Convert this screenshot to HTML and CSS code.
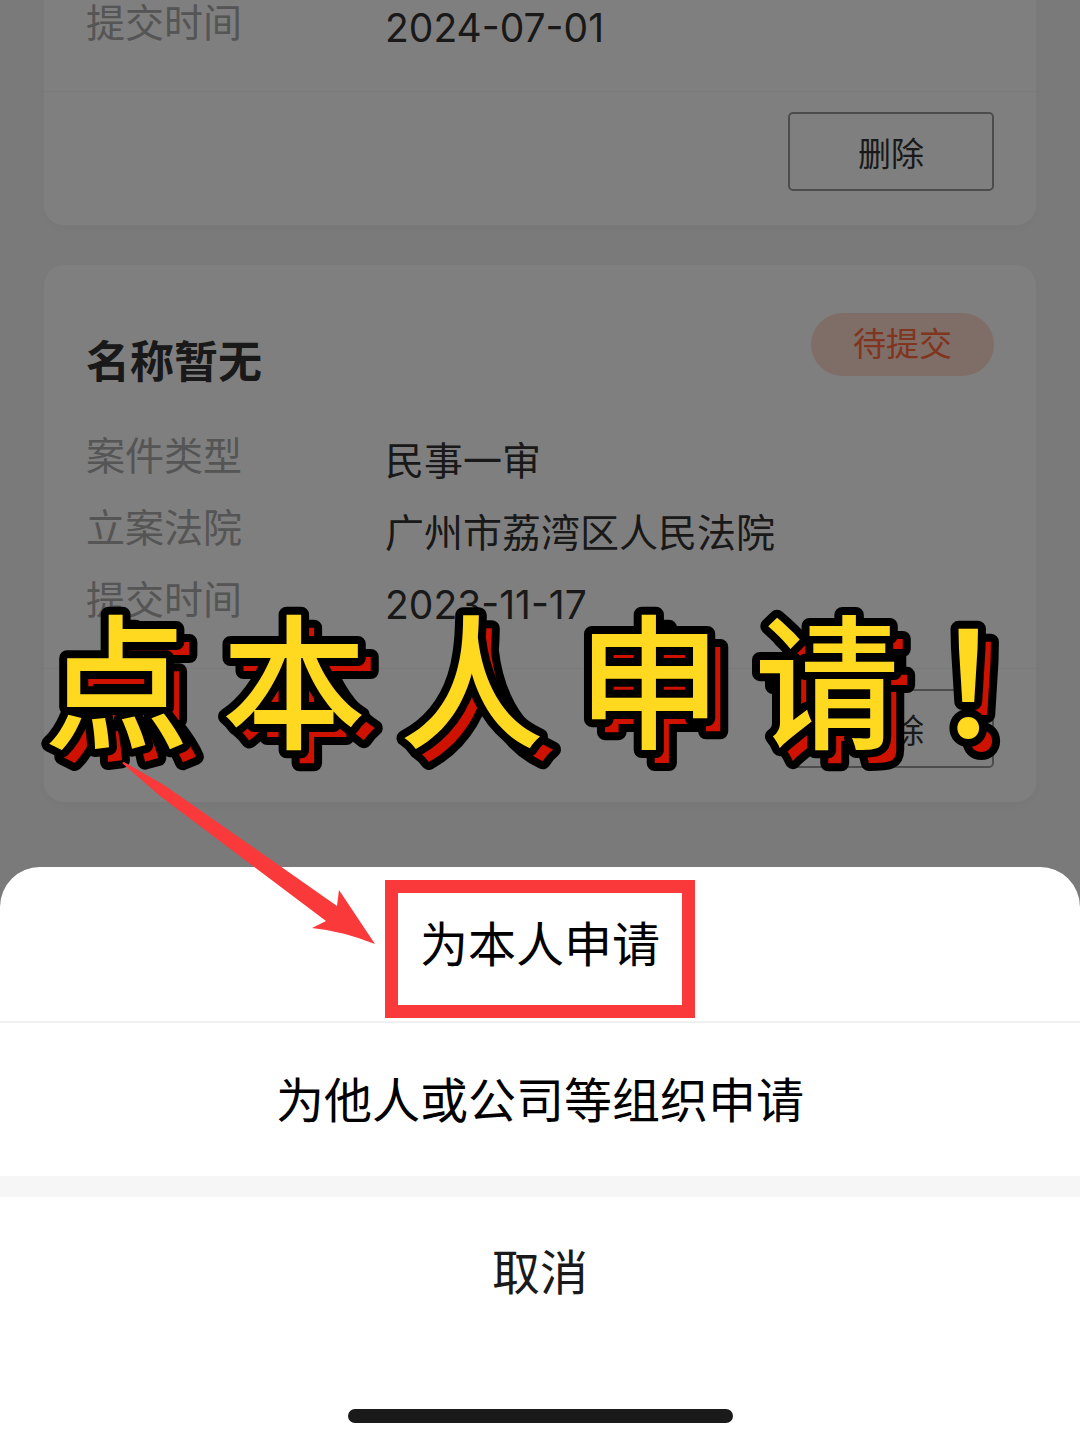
FILE: index.html
```html
<!DOCTYPE html>
<html lang="zh-CN">
<head>
    <meta charset="UTF-8">
    <meta name="viewport" content="width=device-width, initial-scale=1.0">
    <title>为本人申请</title>
    <link rel="stylesheet" href="styles.css">
</head>
<body>
<main class="list">
    <section class="card card-first">
        <dl class="info">
            <div class="row">
                <dt>提交时间</dt>
                <dd>2024-07-01</dd>
            </div>
        </dl>
        <div class="card-footer">
            <button type="button" class="delete">删除</button>
        </div>
    </section>

    <section class="card">
        <div class="card-header">
            <h2>名称暂无</h2>
            <span class="status">待提交</span>
        </div>
        <dl class="info">
            <div class="row">
                <dt>案件类型</dt>
                <dd>民事一审</dd>
            </div>
            <div class="row">
                <dt>立案法院</dt>
                <dd>广州市荔湾区人民法院</dd>
            </div>
            <div class="row">
                <dt>提交时间</dt>
                <dd>2023-11-17</dd>
            </div>
        </dl>
        <div class="card-footer">
            <button type="button" class="delete">删除</button>
        </div>
    </section>
</main>

<div class="mask"></div>

<svg class="caption" width="1050" height="200" viewBox="0 0 1050 200">
    <text class="caption-shadow" x="27" y="151" aria-hidden="true">点 本 人 申 请 ！</text>
    <text class="caption-text" x="14" y="138">点 本 人 申 请 ！</text>
</svg>

<div class="sheet">
    <button type="button" class="option"><span class="marked">为本人申请</span></button>
    <button type="button" class="option">为他人或公司等组织申请</button>
    <button type="button" class="cancel">取消</button>
    <div class="home-bar"></div>
    <svg class="arrow" width="256" height="186" viewBox="0 0 256 186" aria-hidden="true">
        <path d="M2 3 L4 2 L44 25 L160 106 L217 146 L219 130 L255 184 Q222 171 192 168 L206 161 L133 106 L40 36 Z" fill="#fa393b"/>
    </svg>
</div>
</body>
</html>
```

FILE: styles.css
```css
* {
    box-sizing: border-box;
}
body {
    margin: 0;
    min-height: 100vh;
    overflow: hidden;
    background-color: #f5f5f5;
    color: #333;
    font-family: Inter, "Noto Sans CJK SC", sans-serif;
    font-size: 39px;
}
h2, dl, dd {
    margin: 0;
}
button {
    font-family: inherit;
    cursor: pointer;
}

/* case list */
.list {
    display: flex;
    flex-direction: column;
    gap: 40px;
    padding: 0 44px;
}
.card {
    background-color: #fff;
    border-radius: 20px;
    box-shadow: 0 4px 12px rgba(0, 0, 0, 0.03);
}
.card-first {
    margin-top: -7px;
    border-radius: 0 0 20px 20px;
}
.card-header {
    display: flex;
    justify-content: space-between;
    align-items: flex-start;
    padding: 48px 42px 0;
}
.card-header h2 {
    padding-top: 17px;
    font-size: 44px;
    line-height: 64px;
    font-weight: bold;
}
.status {
    padding: 0 42px;
    border-radius: 32px;
    background-color: #ffdcd0;
    color: #ff6a3c;
    font-size: 33px;
    line-height: 63px;
}
.info {
    padding: 0 42px 26px;
}
.card-header + .info {
    padding-top: 32px;
}
.row {
    display: flex;
    height: 72px;
}
.row dt {
    width: 299px;
    color: #aaa;
    line-height: 60px;
}
.row dd {
    flex: 1;
    line-height: 69px;
}
.card-footer {
    display: flex;
    justify-content: flex-end;
    padding: 20px 42px 34px;
    border-top: 1px solid #f5f5f5;
}
.delete {
    width: 206px;
    height: 79px;
    border: 2px solid #999;
    border-radius: 5px;
    background-color: #fff;
    color: #333;
    font-size: 33px;
}

.mask {
    position: fixed;
    inset: 0;
    background-color: rgba(0, 0, 0, 0.5);
}

/* big outlined caption with a red copy behind it */
.caption {
    position: absolute;
    top: 600px;
    left: 30px;
    overflow: visible;
    font-family: "Noto Sans CJK SC", sans-serif;
    font-size: 145px;
    font-weight: 500;
    stroke: #000;
    stroke-width: 16px;
    stroke-linejoin: round;
    paint-order: stroke;
}
.caption-text {
    fill: #ffd91f;
}
.caption-shadow {
    fill: #cf1100;
}

/* action sheet */
.sheet {
    position: fixed;
    left: 0;
    right: 0;
    bottom: 0;
    display: flex;
    flex-direction: column;
    border-radius: 40px 40px 0 0;
    background-color: #fff;
}
.option,
.cancel {
    height: 155px;
    padding: 0 0 6px;
    border: none;
    background: none;
    color: #000;
    font-size: 48px;
}
.option:first-child {
    height: 154px;
}
.option + .option {
    border-top: 2px solid #f0f0f0;
}
.cancel {
    height: 170px;
    border-top: 21px solid #f6f6f6;
    color: #1a1a1a;
}
.marked {
    position: relative;
}
.marked::after {
    content: "";
    position: absolute;
    inset: -35px -35px -44px;
    border: 13px solid #fa393b;
}
.home-bar {
    width: 385px;
    height: 14px;
    margin: 63px auto 16px;
    border-radius: 7px;
    background-color: #1a1a1a;
}
.arrow {
    position: absolute;
    top: -107px;
    left: 120px;
}
```
